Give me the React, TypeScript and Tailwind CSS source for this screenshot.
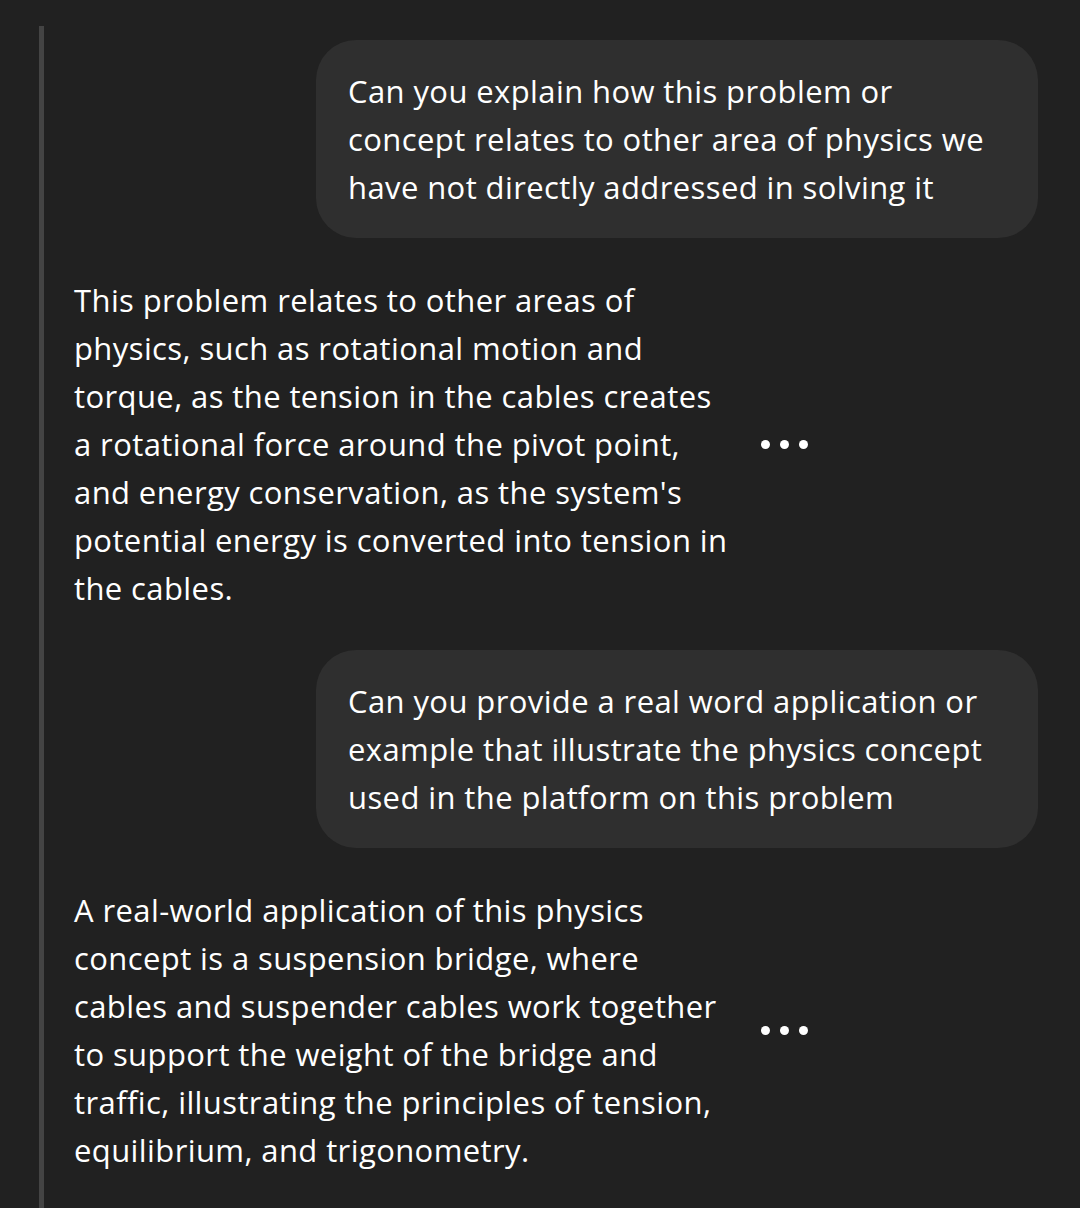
import React from 'react'

type Msg = { role: 'user' | 'bot'; text: string }

const messages: Msg[] = [
  {
    role: 'user',
    text: 'Can you explain how this problem or concept relates to other area of physics we have not directly addressed in solving it',
  },
  {
    role: 'bot',
    text: "This problem relates to other areas of physics, such as rotational motion and torque, as the tension in the cables creates a rotational force around the pivot point, and energy conservation, as the system's potential energy is converted into tension in the cables.",
  },
  {
    role: 'user',
    text: 'Can you provide a real word application or example that illustrate the physics concept used in the platform on this problem',
  },
  {
    role: 'bot',
    text: 'A real-world application of this physics concept is a suspension bridge, where cables and suspender cables work together to support the weight of the bridge and traffic, illustrating the principles of tension, equilibrium, and trigonometry.',
  },
]

function Dots() {
  return (
    <div className="flex items-center gap-[10px]">
      <span className="w-[9px] h-[9px] rounded-full bg-white" />
      <span className="w-[9px] h-[9px] rounded-full bg-white" />
      <span className="w-[9px] h-[9px] rounded-full bg-white" />
    </div>
  )
}

export default function App() {
  return (
    <main
      className="min-h-[1208px] h-[1208px] overflow-hidden bg-[#212121] text-white antialiased"
      style={{ fontFamily: '"Open Sans", "Noto Sans", sans-serif' }}
    >
      <div className="flex h-full pt-[26px]">
        <div className="ml-[39px] w-[5px] bg-[#444444] shrink-0" />
        <div className="flex-1 flex flex-col pt-[14px] pr-[42px] gap-[38px]">
          {messages.map((m, i) =>
            m.role === 'user' ? (
              <div key={i} className="flex justify-end">
                <div className="w-[722px] bg-[#2f2f2f] rounded-[40px] pl-[32px] pr-[30px] py-[27px] text-[31px] leading-[48px] tracking-[0.4px]">
                  {m.text}
                </div>
              </div>
            ) : (
              <div key={i} className="flex items-center pl-[30px]">
                <p className="w-[656px] text-[31px] leading-[48px] tracking-[0.4px]">{m.text}</p>
                <div className="ml-[31px]">
                  <Dots />
                </div>
              </div>
            )
          )}
        </div>
      </div>
    </main>
  )
}
